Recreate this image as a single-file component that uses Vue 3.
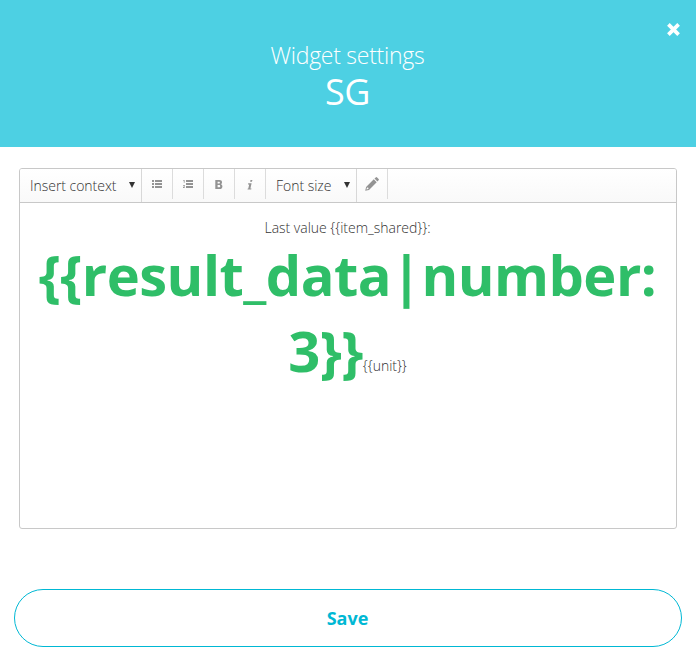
<script setup>
const intro = 'Last value {{item_shared}}:'
const valueLines = ['{{result_data|number:', '3}}']
const unit = '{{unit}}'
</script>

<template>
  <div class="dialog">
    <header class="header">
      <button class="close" aria-label="Close">
        <svg width="13" height="13" viewBox="0 0 13 13"><path d="M1.4 1.4L11.6 11.6M11.6 1.4L1.4 11.6" stroke="#fff" stroke-width="3.7" /></svg>
      </button>
      <div class="title">Widget settings</div>
      <div class="name">SG</div>
    </header>
    <main class="editor">
      <div class="toolbar">
        <div class="select context"><span class="label">Insert context</span><svg class="arrow" width="6" height="6" viewBox="0 0 6 6"><path d="M0 0H6L3 6Z" /></svg></div>
        <button class="tool" aria-label="Bulleted list">
          <svg width="10" height="8" viewBox="0 0 10 8"><path d="M0 0h2v2H0zM3 0h7v2H3zM0 3h2v2H0zM3 3h7v2H3zM0 6h2v2H0zM3 6h7v2H3z" /></svg>
        </button>
        <button class="tool" aria-label="Numbered list">
          <svg width="10" height="8" viewBox="0 0 10 8"><path d="M3 0h7v2H3zM3 3h7v2H3zM3 6h7v2H3zM.8 0h.8v2.8H.8V.9H.2V.4zM0 5h1.8v1.2L.9 7.2h1V8H0v-.7l1-1.1v-.4H0z" /></svg>
        </button>
        <button class="tool" aria-label="Bold">
          <svg width="8" height="9" viewBox="0 0 8 9"><path fill-rule="evenodd" d="M.3 0H4.4C6.2 0 7 .9 7 2.2C7 3.2 6.6 3.8 5.8 4.2C6.8 4.5 7.4 5.3 7.4 6.4C7.4 8 6.3 9 4.5 9H.3ZM2.6 1.7V3.5H3.9C4.6 3.5 4.9 3.1 4.9 2.5C4.9 1.9 4.6 1.7 3.9 1.7ZM2.6 5.1V7.3H4C4.8 7.3 5.2 7 5.2 6.2C5.2 5.5 4.8 5.1 4 5.1Z" /></svg>
        </button>
        <button class="tool" aria-label="Italic">
          <svg width="6" height="10" viewBox="0 0 6 10"><path d="M3.5 0H5.4L5 1.8H3.1ZM1.2 3.3H4.6L3.4 8.4H4.5L4.2 9.5H.5L.8 8.4H1.3L2.2 4.4H1Z" /></svg>
        </button>
        <div class="select size"><span class="label">Font size</span><svg class="arrow" width="6" height="6" viewBox="0 0 6 6"><path d="M0 0H6L3 6Z" /></svg></div>
        <button class="tool pencil" aria-label="Color">
          <svg width="14" height="14" viewBox="0 0 14 14"><path fill-rule="evenodd" d="M10.7.4Q11.4-.3 12.1.4L13.6 1.9Q14.3 2.6 13.6 3.3L12.4 4.5L9.5 1.6ZM8.8 2.3L11.7 5.2L4 12.9L.2 13.8L1.1 10ZM2 10.6L1.4 12.6L3.4 12L3.4 10.8Z" /></svg>
        </button>
      </div>
      <div class="content">
        <div class="intro">{{ intro }}</div>
        <div v-for="(line, i) in valueLines" :key="i" class="line"><b>{{ line }}</b><span v-if="i === 1">{{ unit }}</span></div>
      </div>
    </main>
    <footer class="footer"><button class="save">Save</button></footer>
  </div>
</template>

<style>
body { background: #fff; }
</style>

<style scoped>
.dialog { height: 667px; box-sizing: border-box; font-family: "Open Sans", sans-serif; font-weight: 300; color: #333; overflow: hidden; }
button { border: 0; background: none; padding: 0; font-family: inherit; }
.header { position: relative; height: 147px; box-sizing: border-box; padding: 39px 1px 0 0; background: #4dd0e3; color: #fff; text-align: center; }
.title { font-size: 23px; line-height: 32px; letter-spacing: -0.27px; }
.name { font-size: 36px; line-height: 42px; font-weight: 400; letter-spacing: -0.5px; }
.close { position: absolute; top: 23px; right: 16px; width: 13px; height: 13px; }
.close svg { display: block; overflow: visible; }
.editor { margin: 21px 19px 0; height: 361px; box-sizing: border-box; border: 1px solid #c8c8c8; border-radius: 3px; }
.toolbar { display: flex; height: 34px; box-sizing: border-box; border-bottom: 1px solid #c8c8c8; background: linear-gradient(#fff, #f9f9f9); border-radius: 2px 2px 0 0; }
.select { display: flex; justify-content: space-between; box-sizing: border-box; height: 33px; padding: 0 6px 0 10px; border-right: 1px solid #d8d8d8; font-size: 14px; line-height: 34px; letter-spacing: -0.03px; white-space: nowrap; }
.context { width: 122px; }
.size { width: 91px; }
.arrow { margin-top: 13px; fill: #333; }
.tool { display: flex; justify-content: center; box-sizing: border-box; width: 31px; height: 30px; padding-top: 11px; border-right: 1px solid #dcdcdc; }
.tool svg { fill: #939393; flex: none; }
.pencil { padding-top: 8px; }
.content { padding: 15px 1px 0 0; text-align: center; font-size: 14px; letter-spacing: -0.02px; }
.intro { line-height: 20px; margin-bottom: -2px; }
.line { height: 76px; line-height: 76px; white-space: nowrap; }
.line b { font-size: 56px; font-weight: 700; color: #2fbe68; letter-spacing: -0.52px; }
.line span { position: relative; top: -1px; }
.footer { padding: 60px 14px 0; }
.save { display: block; width: 100%; height: 58px; padding-right: 1px; border: 1px solid #00b8d4; border-radius: 29px; color: #00b8d4; font-size: 18px; font-weight: 700; }
</style>
